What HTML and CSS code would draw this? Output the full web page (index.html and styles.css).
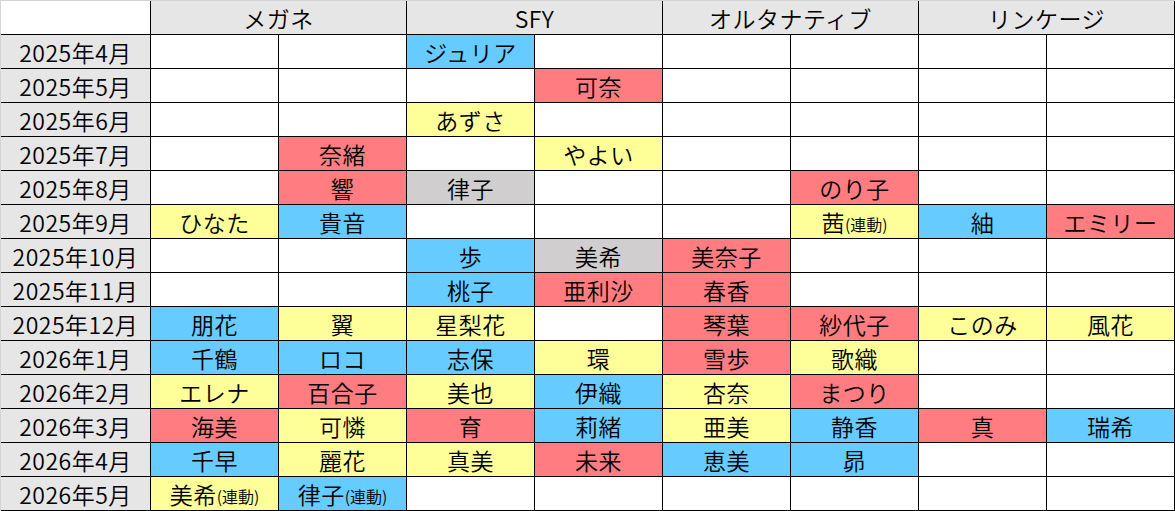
FILE: index.html
```html
<!DOCTYPE html>
<html lang="ja">
<head>
<meta charset="utf-8">
<title>スケジュール</title>
<link rel="stylesheet" href="styles.css">
</head>
<body>
<div class="sheet">
  <div class="corner"></div>
  <div class="head span2">メガネ</div>
  <div class="head span2">SFY</div>
  <div class="head span2">オルタナティブ</div>
  <div class="head span2">リンケージ</div>

  <div class="month">2025年4月</div>
  <div class="c"></div><div class="c"></div><div class="c b">ジュリア</div><div class="c"></div><div class="c"></div><div class="c"></div><div class="c"></div><div class="c"></div>

  <div class="month">2025年5月</div>
  <div class="c"></div><div class="c"></div><div class="c"></div><div class="c r">可奈</div><div class="c"></div><div class="c"></div><div class="c"></div><div class="c"></div>

  <div class="month">2025年6月</div>
  <div class="c"></div><div class="c"></div><div class="c y">あずさ</div><div class="c"></div><div class="c"></div><div class="c"></div><div class="c"></div><div class="c"></div>

  <div class="month">2025年7月</div>
  <div class="c"></div><div class="c r">奈緒</div><div class="c"></div><div class="c y">やよい</div><div class="c"></div><div class="c"></div><div class="c"></div><div class="c"></div>

  <div class="month">2025年8月</div>
  <div class="c"></div><div class="c r">響</div><div class="c g">律子</div><div class="c"></div><div class="c"></div><div class="c r">のり子</div><div class="c"></div><div class="c"></div>

  <div class="month">2025年9月</div>
  <div class="c y">ひなた</div><div class="c b">貴音</div><div class="c"></div><div class="c"></div><div class="c"></div><div class="c y">茜<span class="sm">(連動)</span></div><div class="c b">紬</div><div class="c r">エミリー</div>

  <div class="month">2025年10月</div>
  <div class="c"></div><div class="c"></div><div class="c b">歩</div><div class="c g">美希</div><div class="c r">美奈子</div><div class="c"></div><div class="c"></div><div class="c"></div>

  <div class="month">2025年11月</div>
  <div class="c"></div><div class="c"></div><div class="c b">桃子</div><div class="c r">亜利沙</div><div class="c r">春香</div><div class="c"></div><div class="c"></div><div class="c"></div>

  <div class="month">2025年12月</div>
  <div class="c b">朋花</div><div class="c y">翼</div><div class="c y">星梨花</div><div class="c"></div><div class="c r">琴葉</div><div class="c r">紗代子</div><div class="c y">このみ</div><div class="c y">風花</div>

  <div class="month">2026年1月</div>
  <div class="c b">千鶴</div><div class="c b">ロコ</div><div class="c b">志保</div><div class="c y">環</div><div class="c r">雪歩</div><div class="c y">歌織</div><div class="c"></div><div class="c"></div>

  <div class="month">2026年2月</div>
  <div class="c y">エレナ</div><div class="c r">百合子</div><div class="c y">美也</div><div class="c b">伊織</div><div class="c y">杏奈</div><div class="c r">まつり</div><div class="c"></div><div class="c"></div>

  <div class="month">2026年3月</div>
  <div class="c r">海美</div><div class="c y">可憐</div><div class="c r">育</div><div class="c b">莉緒</div><div class="c y">亜美</div><div class="c b">静香</div><div class="c r">真</div><div class="c b">瑞希</div>

  <div class="month">2026年4月</div>
  <div class="c b">千早</div><div class="c y">麗花</div><div class="c y">真美</div><div class="c r">未来</div><div class="c b">恵美</div><div class="c b">昴</div><div class="c"></div><div class="c"></div>

  <div class="month">2026年5月</div>
  <div class="c y">美希<span class="sm">(連動)</span></div><div class="c b">律子<span class="sm">(連動)</span></div><div class="c"></div><div class="c"></div><div class="c"></div><div class="c"></div><div class="c"></div><div class="c"></div>
</div>
</body>
</html>
```

FILE: styles.css
```css
html, body {
  margin: 0;
  padding: 0;
  background: #ffffff;
}

.sheet {
  display: grid;
  grid-template-columns: 149px repeat(8, 127px);
  grid-auto-rows: 33px;
  gap: 1px;
  width: 1175px;
  height: 511px;
  box-sizing: border-box;
  background: #000000;
  border-top: 1px solid #d4d4d4;
  border-left: 1px solid #d4d4d4;
  padding: 0 1px 1px 0;
  font-family: "Noto Sans CJK JP", "Noto Sans", sans-serif;
  font-size: 23px;
  font-weight: 350;
  letter-spacing: 0.5px;
  color: #000000;
}

.sheet > div {
  display: flex;
  align-items: center;
  justify-content: center;
  line-height: 1;
  white-space: nowrap;
  background: #ffffff;
  padding-top: 1px;
}

.sheet > .corner {
  background: #ffffff;
}

.sheet > .head {
  background: #e7e6e6;
}

.span2 {
  grid-column: span 2;
}

.sheet > .month {
  background: #e7e6e6;
}

.sheet > .b { background: #66ccff; }
.sheet > .r { background: #ff7c80; }
.sheet > .y { background: #ffff99; }
.sheet > .g { background: #d0cece; }

.sm {
  font-size: 16px;
  letter-spacing: 0;
  padding-top: 4px;
}
```
